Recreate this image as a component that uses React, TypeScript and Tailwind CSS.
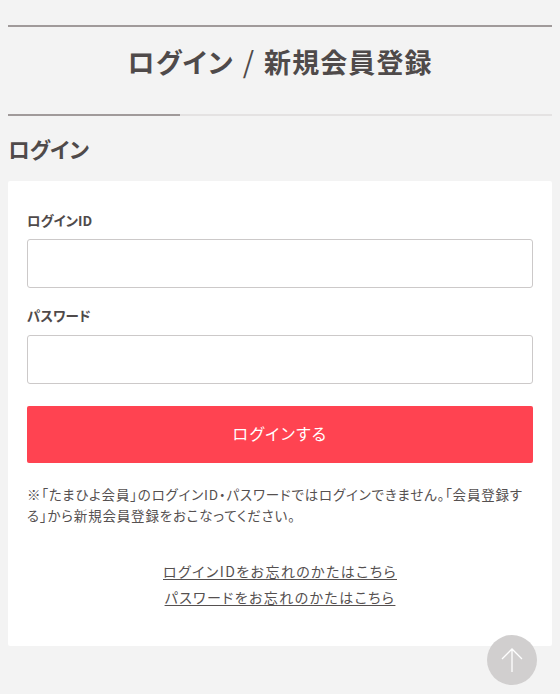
const font = "[font-family:'Noto_Sans_CJK_JP','Noto_Sans',sans-serif] [font-feature-settings:'palt']";

export default function App() {
  return (
    <div className={`relative h-[694px] overflow-hidden bg-[#f3f3f3] px-2 pt-[25px] text-[#4f4a4a] ${font}`}>
      <h1 className="flex h-[89px] items-center justify-center border-t-2 border-[#a09a9a] pb-[16px] text-[27px] font-bold tracking-[0.04em]">
        ログイン
        <span className="mx-[9px] mb-[4px] text-[29px] leading-none font-normal">/</span>
        新規会員登録
      </h1>

      <div className="flex h-[2px] bg-[#e4e2e2]">
        <div className="w-[172px] bg-[#a09a9a]" />
      </div>

      <h2 className="mt-[16px] h-[33px] text-[21.5px] leading-[33px] font-bold">ログイン</h2>

      <div className="mt-[16px] h-[465px] rounded-[2px] bg-white px-[19px] pt-[28px]">
        <label className="block h-[30px] text-[13.5px] leading-[22px] font-bold">ログインID</label>
        <input className="block h-[49px] w-full rounded-[3px] border border-[#ccc9c9] bg-white" />

        <label className="mt-[16px] block h-[31px] text-[13.5px] leading-[22px] font-bold">パスワード</label>
        <input className="block h-[49px] w-full rounded-[3px] border border-[#ccc9c9] bg-white" />

        <button className="mt-[22px] flex h-[57px] w-full items-center justify-center rounded-[2px] bg-[#ff4351] pb-[3px] text-[16px] tracking-[0.08em] text-white">
          ログインする
        </button>

        <p className="mt-[21px] text-[13.5px] leading-[21px] tracking-[0.06em] text-[#555050]">
          ※「たまひよ会員」のログインID・パスワードではログインできません。「会員登録する」から新規会員登録をおこなってください。
        </p>

        <div className="mt-[34px] flex flex-col items-center gap-[4px] text-[14px] leading-[22px] tracking-[0.1em] text-[#555050]">
          <a className="underline underline-offset-2">ログインIDをお忘れのかたはこちら</a>
          <a className="underline underline-offset-2">パスワードをお忘れのかたはこちら</a>
        </div>
      </div>

      <button className="absolute top-[635px] left-[487px] flex h-[50px] w-[50px] items-center justify-center rounded-full bg-[#cfcccc]/95">
        <svg width="24" height="26" viewBox="0 0 24 26" fill="none" stroke="#fff" strokeWidth="1.3">
          <path d="M12 25V2M2 12L12 2L22 12" />
        </svg>
      </button>
    </div>
  );
}
